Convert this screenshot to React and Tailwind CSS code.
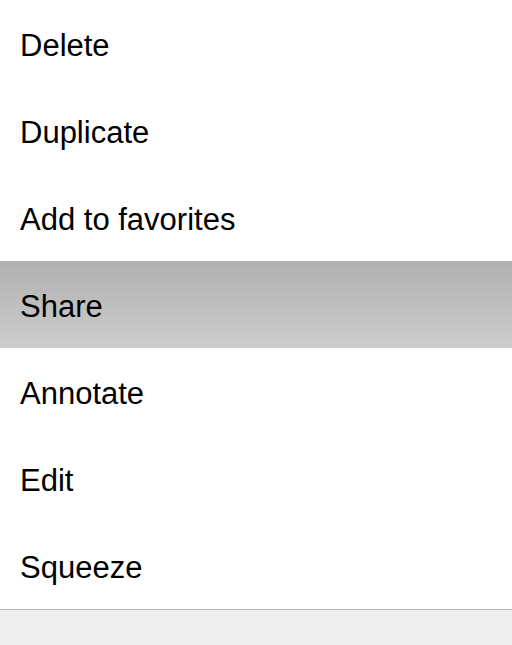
import React from 'react';

const ITEMS = ['Delete', 'Duplicate', 'Add to favorites', 'Share', 'Annotate', 'Edit', 'Squeeze'];

export default function App() {
  const active = 'Share';
  return (
    <div className="w-[512px] h-[645px] bg-[#eeeeee] overflow-hidden" style={{ fontFamily: '"Liberation Sans", Arial, sans-serif' }}>
      <ul className="bg-white border-b border-[#b4b4b4]">
        {ITEMS.map(item => (
          <li
            key={item}
            className={`h-[87px] flex items-center px-5 pt-1.5 text-[31px] text-black ${
              item === active ? 'bg-gradient-to-b from-[#b0b0b0] to-[#cdcdcd]' : ''
            }`}
          >
            {item}
          </li>
        ))}
      </ul>
    </div>
  );
}
